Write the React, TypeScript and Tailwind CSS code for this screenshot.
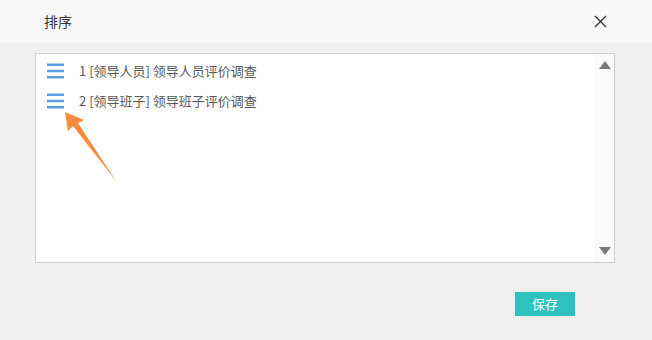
import React from 'react';

const items = [
  { id: 1, text: '1 [领导人员] 领导人员评价调查' },
  { id: 2, text: '2 [领导班子] 领导班子评价调查' },
];

function DragIcon() {
  return (
    <svg width="17" height="16" viewBox="0 0 17 16" className="shrink-0">
      <rect x="0" y="0.5" width="17" height="2.5" fill="#5b9ce0" />
      <rect x="0" y="6.75" width="17" height="2.5" fill="#5b9ce0" />
      <rect x="0" y="13" width="17" height="2.5" fill="#5b9ce0" />
    </svg>
  );
}

export default function App() {
  return (
    <div
      className="relative w-[652px] h-[340px] bg-[#f0f0f0] overflow-hidden"
      style={{ fontFamily: '"Noto Sans CJK SC", "Liberation Sans", sans-serif' }}
    >
      <div className="h-[42px] bg-[#f8f8f8] flex items-center justify-between pl-[44px] pr-[45px]">
        <span className="text-[14px] text-[#333]">排序</span>
        <svg width="13" height="13" viewBox="0 0 13 13">
          <path d="M1 1L12 12M12 1L1 12" stroke="#333" strokeWidth="1.4" />
        </svg>
      </div>

      <div className="ml-[35px] mt-[11px] w-[580px] h-[210px] bg-white border border-[#cfcfcf] flex">
        <div className="flex-1 pt-[2px] pl-[11px]">
          {items.map((it) => (
            <div key={it.id} className="h-[30px] flex items-center gap-[15px]">
              <DragIcon />
              <span className="text-[13px] text-[#5a5a5a]">{it.text}</span>
            </div>
          ))}
        </div>
        <div className="w-[19px] bg-[#fafafa] flex flex-col items-center justify-between py-[7px]">
          <svg width="12" height="8" viewBox="0 0 12 8">
            <path d="M6 0L12 8H0Z" fill="#7a7a7a" />
          </svg>
          <svg width="12" height="8" viewBox="0 0 12 8">
            <path d="M0 0H12L6 8Z" fill="#7a7a7a" />
          </svg>
        </div>
      </div>

      <div className="flex justify-end pr-[77px] mt-[29px]">
        <button className="w-[60px] h-[24px] bg-[#2ec2bf] text-white text-[13px] flex items-center justify-center">
          保存
        </button>
      </div>

      <svg className="absolute left-0 top-0 pointer-events-none" width="652" height="340">
        <polygon points="65,112 84,120 78,123 116,181 73,126 68,131" fill="#f98c3c" />
      </svg>
    </div>
  );
}
